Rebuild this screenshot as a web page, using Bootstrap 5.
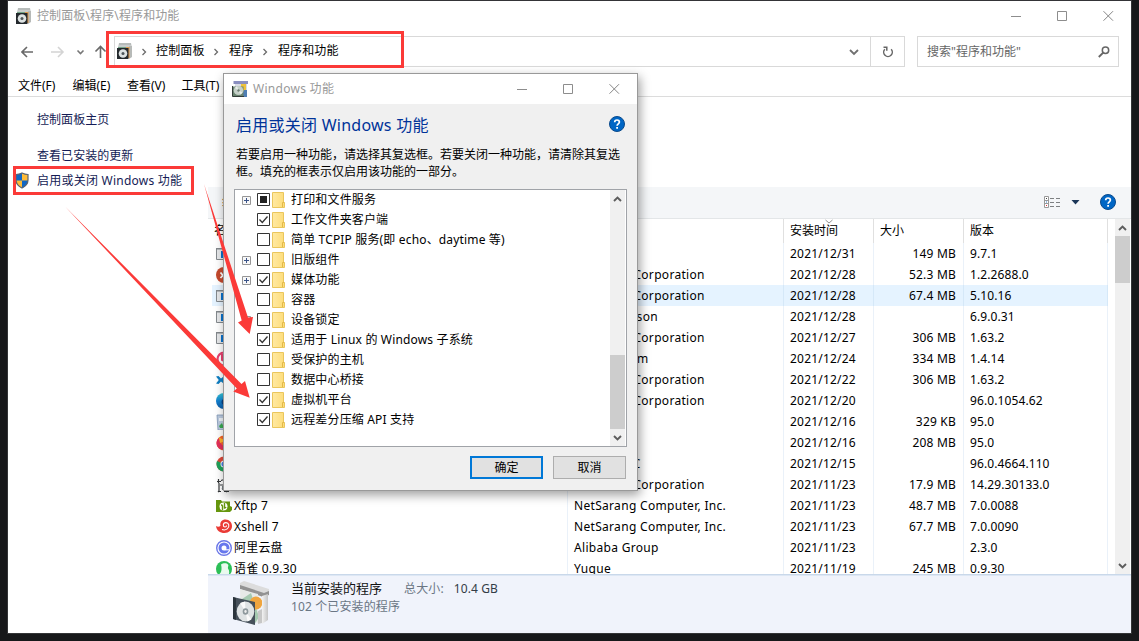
<!doctype html>
<html lang="zh-CN"><head>
<meta charset="utf-8"/><meta name="viewport" content="width=device-width,initial-scale=1"/>
<title>程序和功能</title>
<link href="https://cdn.jsdelivr.net/npm/bootstrap@5.3.2/dist/css/bootstrap.min.css" rel="stylesheet">
<style>
body{background:#17181a;font:12px/16px "Noto Sans","Noto Sans CJK SC",sans-serif;color:#000;width:1139px;height:641px;overflow:hidden}
svg{display:block;flex:none}
.win{margin:0 7px;width:1125px;height:634px;border:1px solid #343537;border-top-color:#343437}
.titlebar{height:30px;color:#999;padding-left:8px;letter-spacing:.12px}
.titlebar .cap{padding-left:5px}
.capbtn{width:46px;height:30px;display:flex;align-items:center;justify-content:center;padding-left:1px}
.navrow{height:41px;padding:5px 12px 5px 13px}
.arrows{width:93px;height:31px}
.addr{width:791px;height:31px;border:1px solid #d9d9d9}
.addr .crumbs{padding:0 0 1px 2px;height:29px;letter-spacing:.15px}
.crumbs .sep{width:24.5px;display:flex;justify-content:center;padding:1px 2px 0 0}
.crumbs .sep.first{width:23px}
.addrdrop{margin:2px 11px 0 0}
.refresh{width:34px;height:29px;border-left:1px solid #d9d9d9}
.searchbox{width:202px;height:31px;margin-left:12px;border:1px solid #d9d9d9;padding:0 8px 0 9px;color:#666}
.menurow{height:25px;padding:4px 9px 0 10px;border-bottom:1px solid #dcdcdc}
.menurow span{width:54.5px}
.side{width:200px;color:#151c55;padding-top:10px;letter-spacing:.05px}
.side a{color:inherit;text-decoration:none;padding-left:29px;height:25px;line-height:25px}
.side .gap-above{margin-top:11px}
.side a.shielded{padding-left:6px;display:flex;align-items:center;gap:7px;letter-spacing:.24px}
.cmdbar{margin-top:90px;height:32px;background:#f4f6f8;border-bottom:1px solid #e3e6e8;padding:0 15px 2px 14px}
.grid{width:900px;height:355px;overflow:hidden;letter-spacing:.2px}
.r{display:flex;height:21px;line-height:21px;white-space:nowrap}
.r>div{border-right:1px solid #eaf1f9;padding-left:6px;overflow:hidden}
.r.head{height:24px;line-height:24px;letter-spacing:0}
.r.head>div{border-color:#e0e0e0}
.r .c1{width:356px;padding-left:4px;display:flex;align-items:center;gap:2px}
.r .c2{width:216px;letter-spacing:.31px}.r .c3,.r .c4{width:90px}.r .c5{width:144px;letter-spacing:.1px}
.r:not(.head) .c4{text-align:right;padding-right:7px}
.r.head .c1{padding-left:2px}
.r.sel>div{background:#e5f3ff;border-color:#d5e8f8}
.vbar{background:#f0f0f0;display:flex;flex-direction:column;align-items:center}
.vbar .thumb{background:#cdcdcd;width:100%}
.mainbar{width:15px;height:355px;margin-right:1px}
.mainbar .thumb{height:47px}
.up{height:17px;display:flex;align-items:center}
.details{height:59px;background:#f0f3fb;border-top:1px solid #c9d8ea;box-shadow:inset 0 1px #dde7f4;padding:4px 0 0 25px}
.details .info{padding-left:18px;color:#6a7684;letter-spacing:.12px}
.details .line1{font-size:13px;line-height:19px;color:#111;letter-spacing:0}
.details .lbl{margin-left:22px}
.details .num{margin-left:10px;color:#333c46}
.details .count{margin-top:1px}
.dlg{position:absolute;left:223px;top:73px;width:415px;height:418px;border:1px solid #999;background:#f0f0f0;box-shadow:2px 4px 10px rgba(0,0,0,.38)}
.dlg .titlebar{background:#fff;letter-spacing:.28px}
.dlg h1{font-size:16px;line-height:22px;color:#039;margin:0;font-weight:400;letter-spacing:.25px}
.dlg .inner{padding:10px 9px 0 12px}
.helpbtn{margin:0 3px 2px 0}
.msg{line-height:17px;margin:10px 0 0}
.tree{width:393px;height:258px;margin:9px 0 0 -2px;border:1px solid #a0a3a8;background:#fff}
.node{height:20px;display:flex;align-items:center;padding-left:7px}
.node .exp{width:15px}
.node .lbl{padding-left:5px;letter-spacing:.16px;white-space:nowrap}
.node .box{margin-bottom:1px}
.treebar{width:16px;border-right:1px solid #fff;height:256px}
.treebar .thumb{height:74px;margin-top:148px}
.buttons{gap:10px;margin-top:9px;padding-right:2px}
.dbtn{width:73px;height:23px;border:1px solid #adadad;background:#e1e1e1;border-radius:0;font-size:12px;padding:0;line-height:20px;color:#000}
.dbtn.main{border:2px solid #0078d7;line-height:18px}
.marks{position:absolute;left:0;top:0}
</style>
</head><body>
<svg width="0" height="0" class="position-absolute">
  <defs>
    <linearGradient id="gf" x1="0" x2="1"><stop offset="0" stop-color="#ffe9a2"/><stop offset="1" stop-color="#fddc78"/></linearGradient>
    <linearGradient id="ge" x1="0" y1="0" x2="0" y2="1"><stop offset="0" stop-color="#35c4d4"/><stop offset=".5" stop-color="#1380d0"/><stop offset="1" stop-color="#0c59a4"/></linearGradient>
    <linearGradient id="gb" x1="0" x2="1"><stop offset="0" stop-color="#f2f2f2"/><stop offset="1" stop-color="#c4c4c4"/></linearGradient>
  </defs>
  <symbol id="i-prog" viewBox="0 0 16 16"><path d="M2 0h12l1 4H1z" fill="#c9cdcc"/><path d="M2 1h12" stroke="#a5aaa8"/><path d="M1 4h8v3H1z" fill="#74a489"/><path d="M12 3h3v11l-3 2z" fill="#b7bab8"/><path d="M9 4h3.500v11H9z" fill="#dd9a50"/><path d="M0 5h11.500v11H0z" fill="#24292d"/><circle cx="6" cy="10.500" r="4.300" fill="#dde2e2"/><circle cx="6" cy="10.500" r="1.500" fill="#4d5558"/></symbol>
  <symbol id="i-feat" viewBox="0 0 16 16"><path d="M1.500 0H16v3H1.500z" fill="#8a8fc0"/><path d="M3 3h12v12H3z" fill="#d8dbe5"/><path d="M9 3h5v7H9z" fill="#eec23c"/><path d="M12 9h3v7H9z" fill="#507fb4"/><path d="M.500 5.500h11v10H.500z" fill="#69836f"/><path d="M.500 5v10.500H12" fill="none" stroke="#333c38"/><ellipse cx="6.500" cy="9.500" rx="4.800" ry="4.500" fill="#c5d0c8"/><path d="M6.500 9.500L3 7l2-2zM6.500 9.500l4 2-2 2z" fill="#e9efea"/><circle cx="6.500" cy="9.500" r="1.200" fill="#6a7c70"/></symbol>
  <symbol id="i-help" viewBox="0 0 16 16"><circle cx="8" cy="8" r="7.500" fill="#0066c5" stroke="#0a4a8c"/><path d="M5.700 6.200C5.700 3.300 10.400 3.300 10.400 6.100 10.400 7.800 8.100 7.900 8.100 9.700" fill="none" stroke="#fff" stroke-width="1.700"/><path d="M7.200 11h1.800v1.800H7.200z" fill="#fff"/></symbol>
  <symbol id="i-min" viewBox="0 0 11 11"><path d="M0 5.500h10" stroke="#8d8d8d"/></symbol>
  <symbol id="i-max" viewBox="0 0 11 11"><path d="M.500.500h9v9h-9z" fill="none" stroke="#8d8d8d"/></symbol>
  <symbol id="i-close" viewBox="0 0 11 11"><path d="M.500.200l9.500 9.500M10 .200L.500 9.700" stroke="#858585"/></symbol>
  <symbol id="i-sep" viewBox="0 0 6 8"><path d="M1.500 1l3 3-3 3" fill="none" stroke="#6b6b6b" stroke-width="1.300"/></symbol>
  <symbol id="i-up" viewBox="0 0 9 6"><path d="M1 5l3.500-3.500L8 5" fill="none" stroke="#5c5c5c" stroke-width="1.900"/></symbol>
  <symbol id="i-down" viewBox="0 0 9 6"><path d="M1 1l3.500 3.500L8 1" fill="none" stroke="#5c5c5c" stroke-width="1.900"/></symbol>
  <symbol id="i-app" viewBox="0 0 16 16"><path d="M.500 2.500h15v11H.500z" fill="#e6e8ea" stroke="#84898d"/><path d="M0 2h16v1.500H0z" fill="#84898d"/><path d="M5 5h8v7H5z" fill="#0b72cc"/></symbol>
  <symbol id="i-redx" viewBox="0 0 16 16"><circle cx="8" cy="8" r="8" fill="#c5492d"/><path d="M4.500 5.500l5 6M10 5l-5.500 6" stroke="#fff" stroke-width="1.800"/></symbol>
  <symbol id="i-pink" viewBox="0 0 16 16"><circle cx="8" cy="8" r="6.500" fill="none" stroke="#e8416f" stroke-width="2.200"/><path d="M6 3v6l4 2" fill="none" stroke="#e8416f" stroke-width="2"/></symbol>
  <symbol id="i-code" viewBox="0 0 16 16"><path d="M0 4.500L2.500 4 5 6.500 12 1l4 2v10l-4 2-7-5.500L2.500 12 0 11.500 2.800 8z" fill="#0e7fc4"/></symbol>
  <symbol id="i-edge" viewBox="0 0 16 16"><circle cx="8" cy="8" r="8" fill="url(#ge)"/><path d="M5.500 9c0-4 6-4 7-1-3-1-4 2-2 4-3 1-5-1-5-3z" fill="#0b3f80"/></symbol>
  <symbol id="i-bin" viewBox="0 0 16 16"><path d="M1 1h14l-1 15H2z" fill="#bccbe0" stroke="#8197b6" stroke-width=".800"/><path d="M3 4h10v3H3z" fill="#eef3f8"/><path d="M3 12l3-3 2 5H4z" fill="#39a852"/></symbol>
  <symbol id="i-fox" viewBox="0 0 16 16"><circle cx="8" cy="8" r="7.500" fill="#f4682c"/><path d="M.500 8C.500 16 12 17 15 10 9 13 4 11 3 3 1 5 .500 6 .500 8z" fill="#e3305b"/><path d="M3 2c1 2 4 1 6 4L4 8z" fill="#ffb52c"/></symbol>
  <symbol id="i-chrome" viewBox="0 0 16 16"><circle cx="8" cy="8" r="7.500" fill="#de4a3b"/><path d="M1 5C-1 10 3 16 8 15.500L10 9z" fill="#1fa35c"/><path d="M10 9L8 15.500C14 15 16 10 15 5H9z" fill="#f5c533"/><circle cx="8" cy="8" r="3.500" fill="#fff"/><circle cx="8" cy="8" r="2.600" fill="#477fe8"/></symbol>
  <symbol id="i-setup" viewBox="0 0 16 16"><path d="M2.500 2v4M1 4.500h4M3 6v8l-1 1M5 3.500l3-1v10M4 8h4M2 14.500h3M8 14.500h5M6 11l5 4" stroke="#35383a" fill="none" stroke-width="1.200"/><path d="M7 1h8v9H7z" fill="#3d4279"/><path d="M6 9h7v4H6z" fill="#767e83"/></symbol>
  <symbol id="i-xftp" viewBox="0 0 16 16"><path d="M0 2h5l1 1.500h8V8l2 1v3l-2 2H0z" fill="#66960e"/><circle cx="7.500" cy="8.500" r="4" fill="#fff"/><path d="M6.500 12V8a1.500 1.500 0 00-1.500-1M8.500 5v5a1.500 1.500 0 001.500-1" stroke="#66960e" stroke-width="1.400" fill="none"/></symbol>
  <symbol id="i-xshell" viewBox="0 0 16 16"><path d="M0 7c1.500 1 3.500.800 4.500-.200C3.500 3 6 .500 9.500.500c4 0 6.500 3 6.500 6.500 0 4-3 7-7.500 7C4 14 .500 11.500 0 7z" fill="#ea3b36"/><path d="M6 10.500C10 12 13.500 9 12.800 5.800 12 2.800 7.500 3 7.300 6c-.100 2.400 3.200 2.600 3.200.500" fill="none" stroke="#fff" stroke-width="1.100"/></symbol>
  <symbol id="i-ali" viewBox="0 0 16 16"><circle cx="8" cy="8" r="7.300" fill="#fff" stroke="#6c78e8" stroke-width="1.400"/><circle cx="8" cy="8" r="4" fill="none" stroke="#6778ed" stroke-width="3"/><path d="M8.500 9.800h4.500" stroke="#fff" stroke-width="1.100" fill="none"/></symbol>
  <symbol id="i-yuque" viewBox="0 0 16 16"><circle cx="8" cy="8" r="8" fill="#2cbf57"/><path d="M2 14c4-2 3.500-6 3.500-8L5 3.500C7 2 10.500 1.500 12 3.500c1 1.500-.500 2.500 0 4 1.500 2 1.500 4.500.500 6.500-3 2.500-8 2-10.500 0z" fill="#e9faee"/></symbol>
</svg>

<div class="win bg-white">
  <div class="titlebar d-flex align-items-center">
    <svg width="16" height="16"><use href="#i-prog"/></svg>
    <span class="cap flex-grow-1">控制面板\程序\程序和功能</span>
    <div class="capbtn"><svg width="11" height="11"><use href="#i-min"/></svg></div>
    <div class="capbtn"><svg width="11" height="11"><use href="#i-max"/></svg></div>
    <div class="capbtn"><svg width="11" height="11"><use href="#i-close"/></svg></div>
  </div>

  <div class="navrow d-flex align-items-center">
    <svg class="arrows" viewBox="0 0 93 31" fill="none" stroke-width="1.600">
      <path d="M12 16H1.500M6 11l-5 5 5 5" stroke="#696969"/>
      <path d="M30 16h11.500M37 11l5 5-5 5" stroke="#d4d4d4"/>
      <path d="M56.500 14.500l3 3 3-3" stroke="#777"/>
      <path d="M79.500 22V11M74.500 15.500l5-5 5 5" stroke="#696969"/>
    </svg>
    <div class="addr d-flex justify-content-between align-items-center">
      <div class="crumbs d-flex align-items-center">
        <svg width="16" height="16"><use href="#i-prog"/></svg>
        <span class="sep first"><svg width="6" height="8"><use href="#i-sep"/></svg></span><span>控制面板</span>
        <span class="sep"><svg width="6" height="8"><use href="#i-sep"/></svg></span><span>程序</span>
        <span class="sep"><svg width="6" height="8"><use href="#i-sep"/></svg></span><span>程序和功能</span>
      </div>
      <div class="d-flex align-items-center">
        <svg width="10" height="7" class="addrdrop" viewBox="0 0 10 7"><path d="M1 1l4 4 4-4" fill="none" stroke="#707070" stroke-width="1.800"/></svg>
        <div class="refresh d-flex align-items-center justify-content-center"><svg width="12" height="12" viewBox="0 0 12 12" fill="none" stroke="#666" stroke-width="1.500"><path d="M9.200 3.300A4.300 4.300 0 112.800 3.300"/><path d="M1.500 1.200h3.300v3.600"/></svg></div>
      </div>
    </div>
    <div class="searchbox d-flex align-items-center justify-content-between">
      <span>搜索"程序和功能"</span>
      <svg width="12" height="12" viewBox="0 0 12 12" fill="none" stroke="#666"><circle cx="7.500" cy="4.300" r="3.200" stroke-width="1.500"/><path d="M5.200 6.600L.800 11" stroke-width="1.900"/></svg>
    </div>
  </div>

  <div class="menurow d-flex align-items-center">
    <span>文件(F)</span><span>编辑(E)</span><span>查看(V)</span><span>工具(T)</span>
  </div>

  <div class="d-flex">
    <div class="side d-flex flex-column">
      <a href="#">控制面板主页</a>
      <a href="#" class="gap-above">查看已安装的更新</a>
      <a href="#" class="shielded">
        <svg width="16" height="17" viewBox="0 0 16 17"><path d="M8 1c2 1 4 1.500 6 1.500V8c0 4-3 6.500-6 8-3-1.500-6-4-6-8V2.500C4 2.500 6 2 8 1z" fill="#1267c4"/><path d="M8 1C6 2 4 2.500 2 2.500V8.500h6zM8 8.500V16c3-1.500 6-4 6-7.500z" fill="#1267c4"/><path d="M8 1c2 1 4 1.500 6 1.500V8.500H8zM8 8.500V16C5 14.500 2 12 2 8.500z" fill="#fdbb38"/><path d="M8 1c2 1 4 1.500 6 1.500V8c0 4-3 6.500-6 8-3-1.500-6-4-6-8V2.500C4 2.500 6 2 8 1z" fill="none" stroke="#5c6570" stroke-width="1.200"/></svg>
        <span>启用或关闭 Windows 功能</span></a>
    </div>
    <div class="flex-grow-1">
      <div class="cmdbar d-flex align-items-center">
        <span class="flex-grow-1">组织</span>
        <svg width="53" height="16" viewBox="0 0 53 16">
          <path d="M1.500 2.500h4v11h-4zM2 6.500h3M2 9.500h3" fill="#fff" stroke="#999"/><path d="M3 4h1v1H3z" fill="#444"/><path d="M3 7.500h1v1H3z" fill="#2a7bd0"/><path d="M3 11h1v1H3z" fill="#d33"/>
          <path d="M7 4.500h4m2 0h4M7 8.500h4m2 0h4M7 12.500h4m2 0h4" stroke="#7d8082"/><path d="M28.500 6h8l-4 4.500z" fill="#1b3658"/></svg>
        <svg width="16" height="16" class="ms-1"><use href="#i-help"/></svg>
      </div>
      <div class="d-flex justify-content-between">
        <div class="grid ps-1" id="grid">
          <div class="r head"><div class="c1">名称</div><div class="c2">发布者</div>
            <div class="c3 position-relative">安装时间<svg class="position-absolute top-0 start-50 translate-middle-x" width="8" height="5" viewBox="0 0 8 5"><path d="M.500 1l3.500 3 3.500-3" fill="none" stroke="#777" stroke-width=".800"/></svg></div>
            <div class="c4">大小</div><div class="c5">版本</div></div>
        </div>
        <div class="vbar mainbar">
          <div class="up"><svg width="9" height="6"><use href="#i-up"/></svg></div><div class="thumb"></div>
          <div class="up mt-auto"><svg width="9" height="6"><use href="#i-down"/></svg></div>
        </div>
      </div>
      <div class="details d-flex">
        <svg width="40" height="48" viewBox="0 0 40 48">
          <path d="M7 4l4-2 25 8v4l-5 2L7 8z" fill="#dcdcdc"/><path d="M7 6l24 8 5-2v4l-6 2L7 10z" fill="#929292"/>
          <path d="M7 10l18 5v29L8 38z" fill="#e6e9e7"/><path d="M6 22l12-8 8 24-5 8z" fill="#a5c9b0"/><circle cx="23" cy="24" r="6.500" fill="#f0a53e"/>
          <path d="M29 17l6-2v26l-6 4z" fill="url(#gb)"/><path d="M25 32l4-2v14l-4 1z" fill="#c7c7c7"/>
          <path d="M0 18l22 5v23L0 40z" fill="#46505a"/><path d="M0 18l3 1v22l-3-1z" fill="#2b343c"/>
          <ellipse cx="12.500" cy="32.500" rx="8.800" ry="10" fill="#dfe3e4"/><path d="M12.500 32.500L7 24l5-1.500zM12.500 32.500l6 8-4 2z" fill="#fafafa"/><ellipse cx="12.500" cy="32.500" rx="2.800" ry="3.200" fill="#8d989c"/><ellipse cx="12.500" cy="32.500" rx="1.200" ry="1.400" fill="#eee"/>
        </svg>
        <div class="info">
          <div class="d-flex align-items-center"><span class="line1">当前安装的程序</span><span class="lbl">总大小:</span><span class="num">10.4 GB</span></div>
          <div class="count">102 个已安装的程序</div>
        </div>
      </div>
    </div>
  </div>
</div>

<div class="dlg">
  <div class="titlebar d-flex align-items-center">
    <svg width="16" height="16"><use href="#i-feat"/></svg>
    <span class="cap flex-grow-1">Windows 功能</span>
    <div class="capbtn"><svg width="11" height="11"><use href="#i-min"/></svg></div>
    <div class="capbtn"><svg width="11" height="11"><use href="#i-max"/></svg></div>
    <div class="capbtn"><svg width="11" height="11"><use href="#i-close"/></svg></div>
  </div>
  <div class="inner">
    <div class="d-flex justify-content-between align-items-center"><h1>启用或关闭 Windows 功能</h1><svg width="16" height="16" class="helpbtn"><use href="#i-help"/></svg></div>
    <p class="msg">若要启用一种功能，请选择其复选框。若要关闭一种功能，请清除其复选<br>框。填充的框表示仅启用该功能的一部分。</p>
    <div class="tree d-flex justify-content-between">
      <div id="tree"></div>
      <div class="vbar treebar">
        <div class="up"><svg width="9" height="6"><use href="#i-up"/></svg></div><div class="thumb"></div>
        <div class="up mt-auto"><svg width="9" height="6"><use href="#i-down"/></svg></div>
      </div>
    </div>
    <div class="d-flex justify-content-end buttons">
      <button class="dbtn main">确定</button><button class="dbtn">取消</button>
    </div>
  </div>
</div>

<svg class="marks" width="1139" height="641" viewBox="0 0 1139 641">
  <g fill="none" stroke="#fb3a38" stroke-width="3"><path d="M107.500 32.500h295v34h-295z"/><path d="M14.500 167.500h178v26h-178z"/></g>
  <g fill="#fb3a38"><path d="M204 184L248 317.500 253 317 249.700 334 238 322.500 241.700 320.500z"/><path d="M65 206.500L241.500 384 245 381 249.700 397.700 233.300 391.500 236.800 388.500z"/></g>
</svg>

<script src="https://cdn.jsdelivr.net/npm/bootstrap@5.3.2/dist/js/bootstrap.bundle.min.js"></script>
<script>
// icon, name, publisher, date, size, version
const programs = [
  ['app','','','2021/12/31','149 MB','9.7.1'],
  ['redx','','Microsoft Corporation','2021/12/28','52.3 MB','1.2.2688.0'],
  ['app','','Microsoft Corporation','2021/12/28','67.4 MB','5.10.16'],
  ['app','','Ian Robertson','2021/12/28','','6.9.0.31'],
  ['app','','Microsoft Corporation','2021/12/27','306 MB','1.63.2'],
  ['pink','','The Py Team','2021/12/24','334 MB','1.4.14'],
  ['code','','Microsoft Corporation','2021/12/22','306 MB','1.63.2'],
  ['edge','','Microsoft Corporation','2021/12/20','','96.0.1054.62'],
  ['bin','','Mozilla','2021/12/16','329 KB','95.0'],
  ['fox','','Mozilla','2021/12/16','208 MB','95.0'],
  ['chrome','','Google LLC','2021/12/15','','96.0.4664.110'],
  ['setup','','Microsoft Corporation','2021/11/23','17.9 MB','14.29.30133.0'],
  ['xftp','Xftp 7','NetSarang Computer, Inc.','2021/11/23','48.7 MB','7.0.0088'],
  ['xshell','Xshell 7','NetSarang Computer, Inc.','2021/11/23','67.7 MB','7.0.0090'],
  ['ali','阿里云盘','Alibaba Group','2021/11/23','','2.3.0'],
  ['yuque','语雀 0.9.30','Yuque','2021/11/19','245 MB','0.9.30']
];
document.getElementById('grid').insertAdjacentHTML('beforeend', programs.map((p,i)=>
  `<div class="r${i===2?' sel':''}"><div class="c1"><svg width="16" height="16"><use href="#i-${p[0]}"/></svg>${p[1]}</div>`+
  `<div class="c2">${p[2]}</div><div class="c3">${p[3]}</div><div class="c4">${p[4]}</div><div class="c5">${p[5]}</div></div>`).join(''));

// label, state (0 off, 1 on, 2 partial), expandable
const features = [
  ['打印和文件服务',2,1],['工作文件夹客户端',1,0],['简单 TCPIP 服务(即 echo、daytime 等)',0,0],['旧版组件',0,1],
  ['媒体功能',1,1],['容器',0,0],['设备锁定',0,1],['适用于 Linux 的 Windows 子系统',1,0],
  ['受保护的主机',0,0],['数据中心桥接',0,0],['虚拟机平台',1,0],['远程差分压缩 API 支持',1,0]
];
const marks = ['','<path d="M2.500 6.500l2.800 3L10.500 3.500" fill="none" stroke="#333" stroke-width="1.300"/>','<path d="M3 3h7v7H3z" fill="#222"/>'];
const plus = '<svg width="9" height="9"><path d="M.5.5h8v8h-8z" fill="#f7f7f7" stroke="#969696"/><path d="M2 4.500h5M4.500 2v5" stroke="#3a5388"/></svg>';
const folder = '<svg width="15" height="16"><path d="M1.500.5h11V10l1 1v4.500h-12z" fill="url(#gf)" stroke="#eac65c"/><path d="M11.500 15v-4.500h2" fill="none" stroke="#e2b94a"/></svg>';
document.getElementById('tree').innerHTML = features.map(f=>
  `<div class="node"><span class="exp">${f[2]?plus:''}</span><svg class="box" width="14" height="13"><path d="M.5.5h12v12H.5z" fill="#fff" stroke="#333"/>${marks[f[1]]}</svg>`+
  `${folder}<span class="lbl">${f[0]}</span></div>`).join('');
</script>
</body></html>
